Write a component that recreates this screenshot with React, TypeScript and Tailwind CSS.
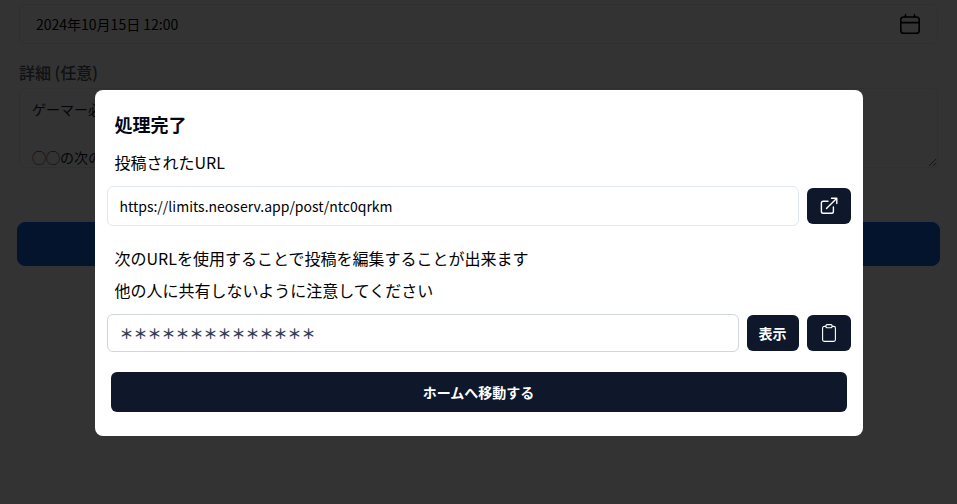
const FONT = "font-['Noto_Sans_CJK_JP','Noto_Sans',sans-serif]";

function CalendarIcon() {
  return (
    <svg viewBox="0 0 20 20" className="h-5 w-5" fill="none" stroke="currentColor" strokeWidth="1.6" strokeLinecap="round">
      <rect x="0.8" y="3" width="18.4" height="16.2" rx="2.8" />
      <path d="M0.8 8.6h18.4M5.5 0.8v2.2M14.5 0.8v2.2" />
    </svg>
  );
}

function OpenIcon() {
  return (
    <svg viewBox="0 0 18 18" className="h-[18px] w-[18px]" fill="none" stroke="currentColor" strokeWidth="1.4" strokeLinecap="round" strokeLinejoin="round">
      <path d="M8 4.2H3.2a1.8 1.8 0 0 0-1.8 1.8v8.4A1.8 1.8 0 0 0 3.2 16.2h8.4a1.8 1.8 0 0 0 1.8-1.8V10" />
      <path d="M6.5 11.5 16.8 1.2M11.5 1.2h5.3v5.3" />
    </svg>
  );
}

function ClipboardIcon() {
  return (
    <svg viewBox="0 0 14 18" className="h-[18px] w-[14px]" fill="none" stroke="currentColor" strokeWidth="1.1" strokeLinejoin="round">
      <path d="M4 2.4H2.2A1.6 1.6 0 0 0 0.6 4v11.8a1.6 1.6 0 0 0 1.6 1.6h9.6a1.6 1.6 0 0 0 1.6-1.6V4a1.6 1.6 0 0 0-1.6-1.6H10" />
      <rect x="4" y="0.6" width="6" height="3.2" rx="1" />
    </svg>
  );
}

function PostForm() {
  return (
    <div className="px-[19px] pt-1">
      <div className="flex h-10 items-center justify-between rounded-md border border-slate-200 pl-4 pr-[17px] text-sm text-black">
        <span>2024年10月15日 12:00</span>
        <CalendarIcon />
      </div>

      <div className="mt-4 text-base leading-6 font-medium text-gray-600">詳細 (任意)</div>
      <textarea
        readOnly
        className="mt-1 block h-20 w-full rounded-md border border-slate-200 px-3 py-2 text-sm leading-6 text-slate-900"
        value={"ゲーマー必見！\n\n◯◯の次の"}
      />

      <div className="mx-[-2px] mt-[54px] h-11 rounded-lg border border-blue-600 bg-[#1d64e1]" />
    </div>
  );
}

function CompleteDialog() {
  return (
    <div className="w-[768px] rounded-lg bg-white px-3 pt-5 pb-6 text-black">
      <h2 className="px-2 text-lg leading-7 font-bold text-[#020817]">処理完了</h2>
      <p className="mt-3 px-2 text-base leading-6">投稿されたURL</p>

      <div className="mt-3 flex items-center gap-2">
        <div className="flex h-10 flex-1 items-center rounded-md border border-slate-200 px-3 text-sm">
          https://limits.neoserv.app/post/ntc0qrkm
        </div>
        <button className="flex h-9 w-11 items-center justify-center rounded-md bg-[#0f172a] text-white">
          <OpenIcon />
        </button>
      </div>

      <p className="mt-5 px-2 text-base leading-6">次のURLを使用することで投稿を編集することが出来ます</p>
      <p className="mt-2 px-2 text-base leading-6">他の人に共有しないように注意してください</p>

      <div className="mt-3 flex items-center gap-2">
        <div className="flex h-[38px] flex-1 items-center rounded-md border border-gray-300 px-3 text-sm font-bold text-gray-700">
          ＊＊＊＊＊＊＊＊＊＊＊＊＊＊
        </div>
        <button className="h-9 w-[52px] rounded-md bg-[#0f172a] text-sm font-bold text-white">表示</button>
        <button className="flex h-9 w-11 items-center justify-center rounded-md bg-[#0f172a] text-white">
          <ClipboardIcon />
        </button>
      </div>

      <button className="mx-1 mt-5 h-10 w-[736px] rounded-md bg-[#0f172a] text-sm font-bold text-white">
        ホームへ移動する
      </button>
    </div>
  );
}

export default function App() {
  return (
    <div className={`h-[504px] w-[957px] overflow-hidden bg-white ${FONT}`}>
      <PostForm />
      <div className="fixed inset-0 bg-black/80" />
      <div className="fixed inset-x-0 top-[90px] flex justify-center">
        <CompleteDialog />
      </div>
    </div>
  );
}
